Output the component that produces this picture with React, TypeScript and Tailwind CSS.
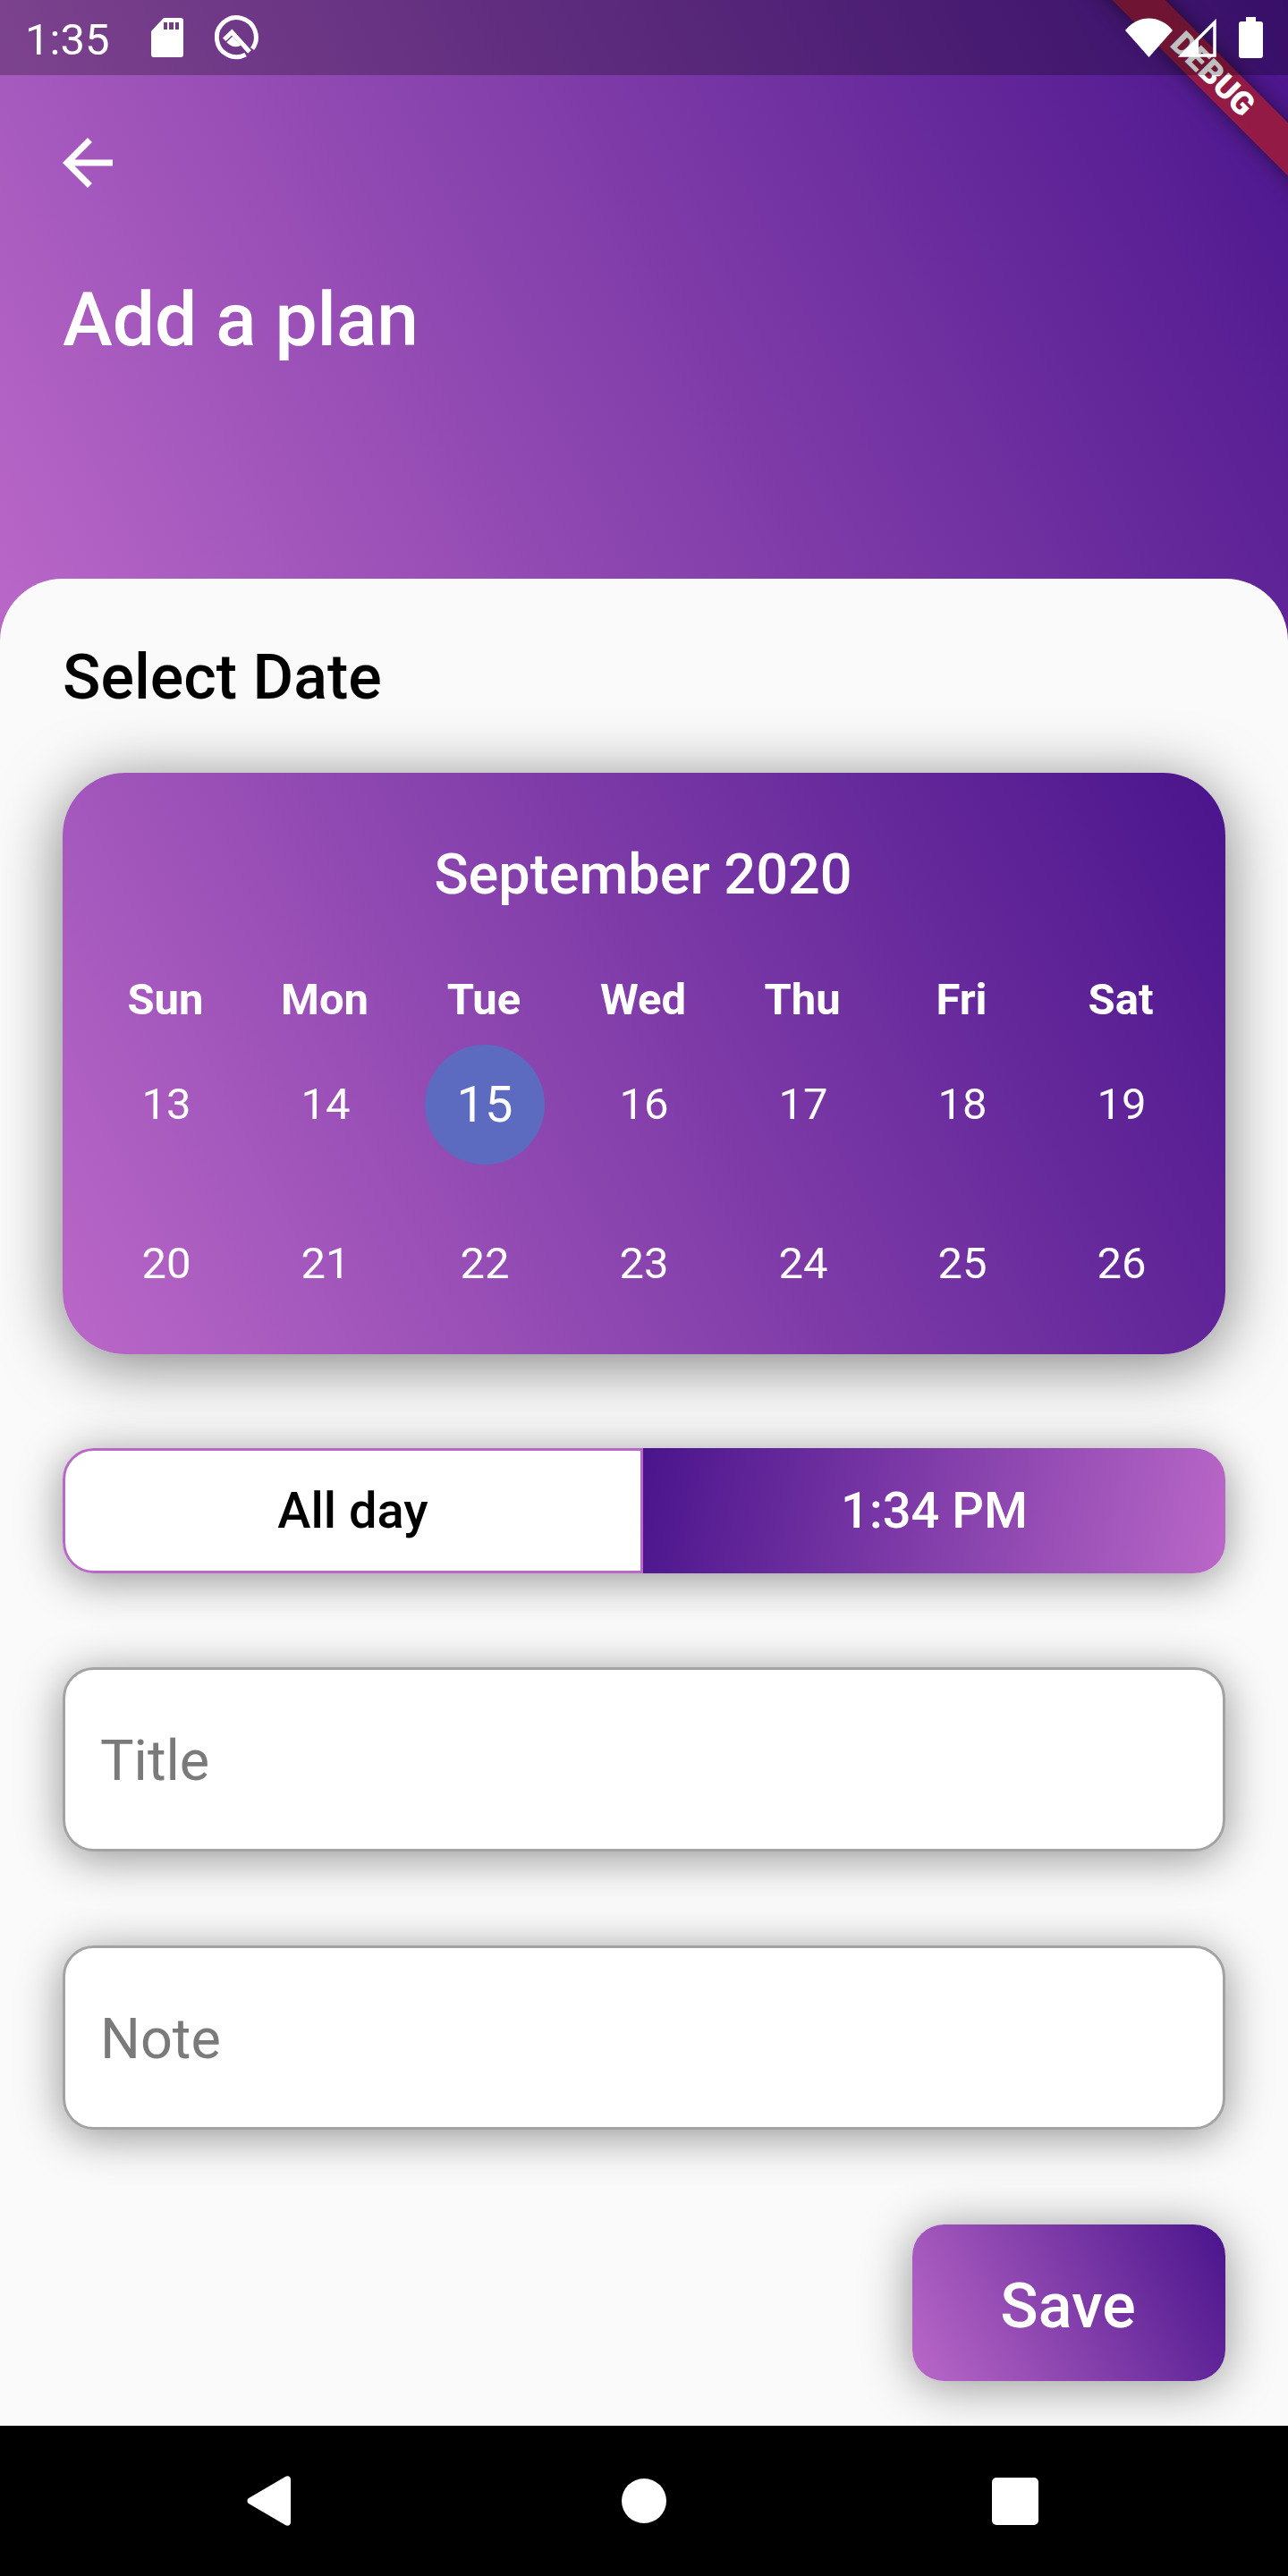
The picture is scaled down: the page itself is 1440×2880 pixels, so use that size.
const WEEK_DAYS = ['Sun', 'Mon', 'Tue', 'Wed', 'Thu', 'Fri', 'Sat'];
const DATES = [13, 14, 15, 16, 17, 18, 19, 20, 21, 22, 23, 24, 25, 26];

function StatusBar() {
  return (
    <div className="relative z-10 flex h-[84px] items-center justify-between bg-black/25 pl-[28px] pr-[28px] text-white">
      <div className="flex items-center">
        <span className="translate-y-[3px] text-[49px] leading-[84px]">1:35</span>
        <svg width="36" height="44" viewBox="0 0 36 44" className="ml-[47px]" fill="#fff">
          <path fillRule="evenodd" d="M14 0h19a3 3 0 0 1 3 3v38a3 3 0 0 1-3 3H3a3 3 0 0 1-3-3V15Zm0 5v8h4V5Zm6 0v8h5V5Zm7 0v8h4V5Z" />
        </svg>
        <svg width="50" height="50" viewBox="0 0 50 50" className="ml-[35px]" fill="none">
          <path d="M34.600 44.100A22 22 0 1 1 42.100 37.600" stroke="#fff" strokeWidth="5" />
          <path d="M10.700 27.300 19.300 19 39 41" stroke="#fff" strokeWidth="5" />
          <path d="M13.300 30.300 20 23.700 29.300 33.700Q21 38 13.300 30.300Z" fill="#fff" />
        </svg>
      </div>
      <div className="flex items-center">
        <svg width="53" height="44" viewBox="0 0 53 44" fill="#fff">
          <path d="M0 14C14-4 39-4 53 14L26.500 44Z" />
        </svg>
        <svg width="44" height="44" viewBox="0 0 44 44" fill="none" className="ml-[5px]">
          <path d="M42 5V42H5Z" stroke="#fff" strokeWidth="3.500" />
          <path d="M5 42 24 23V42Z" fill="#fff" />
        </svg>
        <svg width="27" height="46" viewBox="0 0 27 46" fill="#fff" className="ml-[25px]">
          <path d="M8 0h11v5h5a3 3 0 0 1 3 3v35a3 3 0 0 1-3 3H3a3 3 0 0 1-3-3V8a3 3 0 0 1 3-3h5Z" />
        </svg>
      </div>
    </div>
  );
}

function DebugBanner() {
  return (
    <div className="absolute left-[1156px] top-[62px] flex h-[42px] w-[400px] rotate-45 items-center justify-center bg-[#b71c1c]/65 text-[36px] font-black leading-[42px] text-white shadow-[0_0_21px_rgba(0,0,0,0.5)]">
      DEBUG
    </div>
  );
}

function Calendar() {
  return (
    <div className="h-[650px] rounded-[70px] bg-[linear-gradient(63.4deg,#ba68c8,#4a148c)] pl-[26px] pr-[28px] text-white shadow-[0_10px_70px_rgba(0,0,0,0.5)]">
      <div className="pt-[77px] text-center text-[63px] font-medium leading-[74px]">September 2020</div>
      <div className="mt-[74px] grid grid-cols-7">
        {WEEK_DAYS.map((d) => (
          <div key={d} className="text-center text-[49px] font-bold leading-[58px]">{d}</div>
        ))}
      </div>
      <div className="-mr-[1px] -mt-[1px] ml-[1px] grid grid-cols-7">
        {DATES.map((n) =>
          n === 15 ? (
            <div key={n} className="flex h-[178px] items-center justify-center">
              <div className="flex size-[134px] items-center justify-center rounded-full bg-[#5c6bc0] text-[56px]">{n}</div>
            </div>
          ) : (
            <div key={n} className="flex h-[178px] items-center justify-center text-[49px]">{n}</div>
          ),
        )}
      </div>
    </div>
  );
}

function TextBox({ label, className }: { label: string; className: string }) {
  return (
    <div className={`flex h-[206px] items-center rounded-[35px] border-[3px] border-[#a3a3a3] bg-white pl-[39px] pt-[5px] text-[63px] text-[#7a7a7a] shadow-[0_7px_50px_rgba(0,0,0,0.42)] ${className}`}>
      {label}
    </div>
  );
}

export default function App() {
  return (
    <div className="relative flex h-[2880px] w-[1440px] flex-col overflow-hidden bg-[#fafafa] font-['Roboto',sans-serif]">
      <div className="relative h-[717px] shrink-0 bg-[linear-gradient(64deg,#ba68c8,#4a148c)]">
        <DebugBanner />
        <StatusBar />
        <svg width="84" height="84" viewBox="0 0 24 24" fill="#fff" className="ml-[56px] mt-[56px]">
          <path d="M20 11H7.830l5.590-5.590L12 4l-8 8 8 8 1.410-1.410L7.830 13H20v-2z" />
        </svg>
        <div className="ml-[70px] mt-[85px] text-[84px] font-medium leading-[98px] text-white">Add a plan</div>
      </div>

      <div className="relative -mt-[70px] flex flex-1 flex-col rounded-t-[70px] bg-[#fafafa] px-[70px] pt-[69px]">
        <div className="text-[70px] font-medium leading-[82px] text-black">Select Date</div>
        <div className="mt-[66px]">
          <Calendar />
        </div>

        <div className="mt-[105px] flex h-[140px] rounded-[35px] shadow-[0_7px_50px_rgba(0,0,0,0.42)]">
          <div className="flex w-[649px] items-center justify-center rounded-l-[35px] border-[3px] border-[#ba68c8] bg-white text-[56px] font-medium text-black">All day</div>
          <div className="flex flex-1 items-center justify-center rounded-r-[35px] bg-[linear-gradient(102deg,#4a148c,#ba68c8)] text-[56px] font-medium text-white">1:34 PM</div>
        </div>

        <TextBox label="Title" className="mt-[105px]" />
        <TextBox label="Note" className="mt-[105px]" />

        <div className="mt-[106px] flex justify-end">
          <div className="flex h-[175px] w-[350px] items-center justify-center rounded-[35px] bg-[linear-gradient(63.4deg,#ba68c8,#4a148c)] pr-[2px] pt-[7px] text-[70px] font-medium text-white shadow-[0_5px_55px_rgba(0,0,0,0.42)]">Save</div>
        </div>
      </div>

      <div className="flex h-[168px] shrink-0 items-center bg-black pl-[276px]">
        <svg width="49" height="56" viewBox="0 0 49 56" fill="#fff">
          <path d="M49 4C49 1 46-1 43 1L2 25c-2 1-2 5 0 6l41 24c3 2 6 0 6-3Z" />
        </svg>
        <div className="ml-[370px] size-[50px] rounded-full bg-white" />
        <div className="ml-[364px] h-[53px] w-[52px] rounded-[5px] bg-white" />
      </div>
    </div>
  );
}
